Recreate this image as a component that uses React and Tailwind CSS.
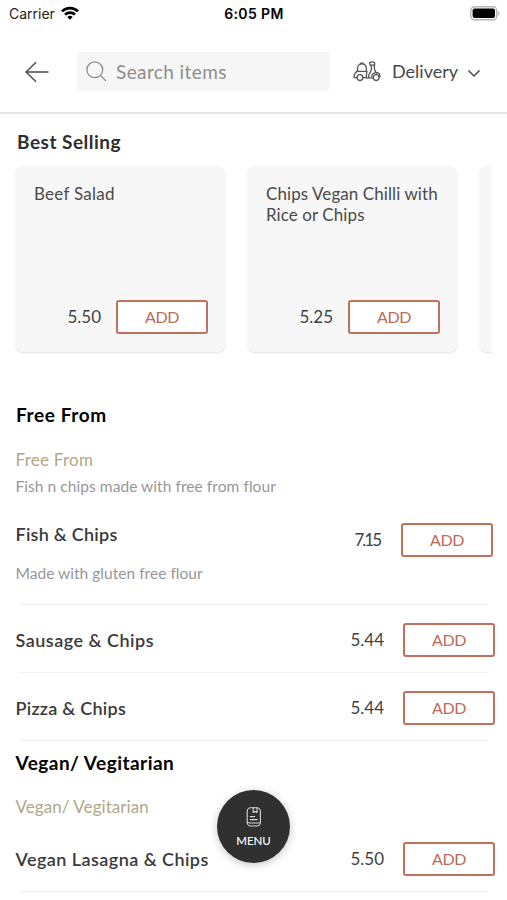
import React from 'react';

const sans = "font-['Lato','Noto_Sans',sans-serif]";

function AddButton() {
  return (
    <button className="box-border flex h-[34px] w-[92px] shrink-0 items-center justify-center rounded-[3px] border-2 border-[#c1705c] bg-white pb-px text-[16px] leading-none tracking-[-0.4px] text-[#bd6a56]">
      ADD
    </button>
  );
}

function Price({ children, tight }) {
  return (
    <span className={`pb-px text-[17px] leading-none text-[#3f3f3f] ${tight ? 'tracking-[-2px]' : 'tracking-[0px]'}`}>
      {children}
    </span>
  );
}

function WifiIcon() {
  return (
    <svg viewBox="0 0 18 14" className="mb-[2px] h-[14px] w-[18px]" fill="none" stroke="#000" strokeWidth="2.6">
      <path d="M1 5.4a11.4 11.4 0 0 1 16 0" />
      <path d="M4 8.7a7.1 7.1 0 0 1 10 0" />
      <path d="M9 13.7 6.3 11a3.9 3.9 0 0 1 5.4 0z" fill="#000" stroke="none" />
    </svg>
  );
}

function BatteryIcon() {
  return (
    <svg viewBox="0 0 30 15" className="mb-[2px] h-[15px] w-[30px]">
      <rect x="0.8" y="0.8" width="26" height="13" rx="3.8" fill="#fff" stroke="#b4b4b4" strokeWidth="1.4" />
      <rect x="2.6" y="2.6" width="22.4" height="9.4" rx="2" fill="#000" />
      <path d="M28.2 5v4.8c1.8-.7 1.8-4.1 0-4.8z" fill="#b4b4b4" />
    </svg>
  );
}

function ScooterIcon() {
  return (
    <svg viewBox="0 0 28 21" className="h-[21px] w-[28px]" fill="none" stroke="#555" strokeWidth="1.300" strokeLinejoin="round" strokeLinecap="round">
      <path d="M4.500 10.600V7.800C4.500 4.500 6.200 2.900 8.900 2.900s4.500 1.600 4.500 4.900v2.800" />
      <path d="M7.200 3c.2-1.600 3.200-1.600 3.400 0M3.800 10.400h10" />
      <path d="M10 16.600h3.200l.6-6M4 10.600c-1.900.9-2.900 2.800-2.900 6h2.800" />
      <circle cx="7" cy="16.600" r="2.900" />
      <path d="M13.200 16.800h7.200" />
      <path d="M16.600 1.500c1.700-.7 3.500-.7 5 0v2.700h-4.400z" />
      <path d="M18 4.200c.8 3.400.3 6.200-1.700 8.600-.8 1-.9 2.400-.5 3.800M21.400 4.200c-.5 3 .2 5.800 2.200 7.800" />
      <path d="M18.600 15.400c.6-2.300 2.400-3.800 4.800-3.800 2.300 0 3.600 1.300 3.700 4.100h-1.200" />
      <circle cx="23.200" cy="16.600" r="2.900" />
    </svg>
  );
}

function MenuIcon() {
  return (
    <svg viewBox="0 0 16 20" className="h-5 w-4" fill="none" stroke="#d8d8d8" strokeWidth="1.100" strokeLinecap="round">
      <rect x="1.2" y="0.8" width="13.2" height="18.2" rx="3.6" />
      <path d="M7.2 1v4.400l1.900-1 1.900 1V1" strokeLinejoin="round" />
      <path d="M4.200 9.600h4.400M4.200 12.600h7M1.400 15.400c.8.600 1.700.6 3 .6h9" />
    </svg>
  );
}

function Card({ children }) {
  return (
    <article className="flex h-[186px] w-[209px] shrink-0 flex-col justify-between rounded-[7px] bg-[#f7f7f7] pb-[18px] pl-[18px] pr-[17px] pt-[17px] shadow-[0_1px_2px_rgba(0,0,0,0.12)]">
      {children}
    </article>
  );
}

function ProductCard({ children, price }) {
  return (
    <Card>
      <h3 className="whitespace-nowrap text-[17px] leading-[21px] text-[#4a4a4a]">{children}</h3>
      <div className="flex items-center justify-end gap-[15px]">
        <Price>{price}</Price>
        <AddButton />
      </div>
    </Card>
  );
}

function Row({ name, price }) {
  return (
    <>
      <div className="flex h-[34px] items-center pl-[15.500px] pr-[12px]">
        <h3 className="flex-1 whitespace-nowrap pb-px text-[18px] font-semibold leading-none text-[#3a3a3a]">{name}</h3>
        <Price>{price}</Price>
        <div className="ml-[19px] flex">
          <AddButton />
        </div>
      </div>
      <hr className="ml-5 mr-[19px] mt-[15px] border-t border-[#f1f1f1]" />
    </>
  );
}

export default function App() {
  return (
    <div className={`relative flex h-[900px] w-[507px] flex-col overflow-hidden bg-white ${sans}`}>
      <div className="grid h-7 shrink-0 grid-cols-3 items-center pl-[9px] pr-[7px] font-['Inter',sans-serif] text-[14px] leading-none text-[#222]">
        <div className="flex items-center gap-[6px]">
          <span>Carrier</span>
          <WifiIcon />
        </div>
        <span className="text-center font-semibold tracking-[0.4px] text-black">
          <span className="mr-[1px]">6:05 PM</span>
        </span>
        <div className="flex justify-end">
          <BatteryIcon />
        </div>
      </div>

      <header className="flex h-[86px] shrink-0 items-center border-b-2 border-[#e6e6e6] pl-6 pt-[3px]">
        <svg viewBox="0 0 26 22" className="h-[22px] w-[26px]" fill="none" stroke="#4a4a4a" strokeWidth="1.400">
          <path d="M24.500 11H2M12 1.200 2 11l10 9.800" />
        </svg>
        <div className="ml-[27px] flex h-[39px] w-[253px] items-center rounded-[4px] bg-[#f6f6f6] pl-[9px] text-[19px] leading-none tracking-[0.4px] text-[#8d8d8d]">
          <svg viewBox="0 0 21 21" className="mr-[9px] h-[21px] w-[21px]" fill="none" stroke="#8d8d8d" strokeWidth="1.300">
            <circle cx="8.800" cy="8.800" r="7.900" />
            <path d="m14.500 14.500 5.500 5.500" />
          </svg>
          <span className="pb-px">Search items</span>
        </div>
        <div className="ml-[23px] flex items-center text-[18px] leading-none text-[#484848]">
          <ScooterIcon />
          <span className="ml-[11px] pb-px">Delivery</span>
          <svg viewBox="0 0 14 9" className="ml-[9px] mt-[3px] h-[9px] w-[14px]" fill="none" stroke="#484848" strokeWidth="1.500">
            <path d="m1.500 1.500 5.500 5.500 5.500-5.500" />
          </svg>
        </div>
      </header>

      <h2 className="mt-[18px] pl-[17px] text-[19px] font-bold leading-5 tracking-[0.5px] text-[#2e2e2e]">Best Selling</h2>
      <section className="-mb-1 ml-3 mr-[15px] mt-[10px] flex gap-[23px] overflow-hidden pb-1 pl-1 pt-1">
        <ProductCard price="5.50">
          <span className="tracking-[0.250px]">Beef Salad</span>
        </ProductCard>
        <ProductCard price="5.25">
          <span className="tracking-[0.080px]">
            Chips Vegan Chilli with
            <br />
            Rice or Chips
          </span>
        </ProductCard>
        <Card />
      </section>

      <section className="mt-[53px]">
        <h2 className="pl-[16px] text-[19px] font-bold leading-5 tracking-[0.600px] text-black">Free From</h2>
        <p className="mt-[25px] pl-[15.500px] text-[17px] leading-5 tracking-[0.250px] text-[#b0a789]">Free From</p>
        <p className="mt-[6px] pl-[15.500px] text-[15.500px] leading-5 tracking-[0.060px] text-[#979797]">Fish n chips made with free from flour</p>
        <div className="mt-[27px] flex h-[34px] items-center pl-[15.500px] pr-[14px]">
          <h3 className="mb-[13px] flex-1 text-[18px] font-semibold leading-none tracking-[0.250px] text-[#3a3a3a]">Fish &amp; Chips</h3>
          <Price tight>7.15</Price>
          <div className="ml-[21px] flex">
            <AddButton />
          </div>
        </div>
        <p className="mt-[6px] pl-[15.500px] text-[15.500px] leading-5 tracking-[0.030px] text-[#979797]">Made with gluten free flour</p>
        <hr className="ml-5 mr-[19px] mt-[21px] border-t border-[#f1f1f1]" />
        <div className="mt-[18px]">
          <Row name={<span className="tracking-[0.500px]">Sausage &amp; Chips</span>} price="5.44" />
        </div>
        <div className="mt-[18px]">
          <Row name={<span className="tracking-[0.250px]">Pizza &amp; Chips</span>} price="5.44" />
        </div>
      </section>

      <section className="mt-[12px]">
        <h2 className="pl-[15.500px] text-[19px] font-bold leading-5 tracking-[0.480px] text-black">Vegan/ Vegitarian</h2>
        <p className="mt-[24px] pl-[15.500px] text-[17px] leading-5 tracking-[0.060px] text-[#b0a789]">Vegan/ Vegitarian</p>
        <div className="mt-[25px]">
          <Row name={<span className="tracking-[0.450px]">Vegan Lasagna &amp; Chips</span>} price="5.50" />
        </div>
      </section>

      <button className="absolute left-[217px] top-[790px] flex h-[73px] w-[73px] flex-col items-center rounded-full bg-[#303030] pt-[17px] text-white shadow-[0_2px_8px_rgba(0,0,0,0.22)]">
        <MenuIcon />
        <span className="mt-[8px] text-[11.500px] font-medium leading-none">MENU</span>
      </button>
    </div>
  );
}
